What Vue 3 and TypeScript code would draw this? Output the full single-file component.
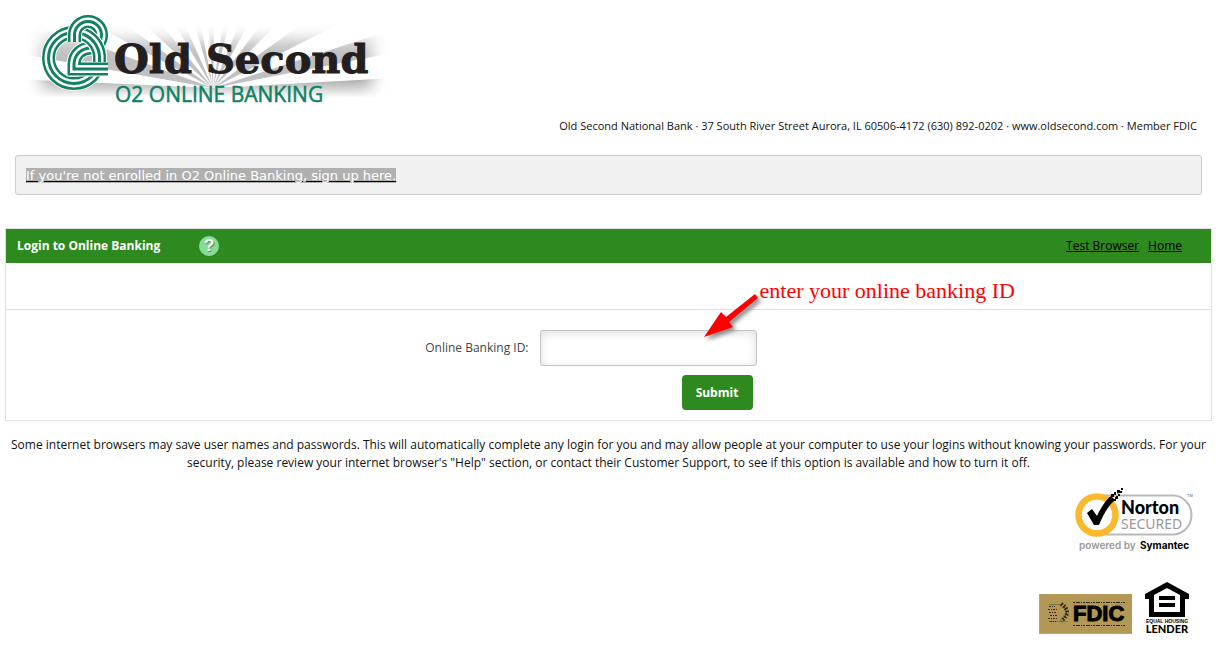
<script setup lang="ts">
import { ref } from 'vue'

const bankingId = ref('')

// Angles in degrees, measured clockwise from the positive x axis; [start, end] of each grey ray.
const rays: [number, number][] = [
  [-170, -160], [-152, -144], [-137, -129], [-121, -114], [-106, -101],
  [-94, -89], [-81, -76], [-68, -61], [-53, -45], [-36, -27], [-18, -11],
]

function wedge([from, to]: [number, number]): string {
  const point = (deg: number): string => {
    const a = (deg * Math.PI) / 180
    return `${(213 + 210 * Math.cos(a)).toFixed(1)},${(88 + 210 * Math.sin(a)).toFixed(1)}`
  }
  return `213,88 ${point(from)} ${point(to)}`
}

const numeral = 'M108 69H74V65C74 54 82 48 91 48C98 46 101.500 41 101.500 35A13.500 13.500 0 0 0 74.500 35V42'
const ring = 'M74 32.500A25.500 25.500 0 1 0 99.500 58A25.500 25.500 0 0 0 74 32.500'
const ringArc = 'M84 34.500A25.500 25.500 0 0 1 99.500 60V62'
const bands = [
  { color: '#fff', width: 15 },
  { color: '#108163', width: 13 },
  { color: '#fff', width: 8 },
  { color: '#108163', width: 3 },
]
</script>

<template>
  <div class="page">
    <header class="top">
      <svg class="logo" width="400" height="115" viewBox="0 0 400 115" role="img" aria-label="Old Second O2 Online Banking">
        <defs>
          <filter id="soft" x="-20%" y="-50%" width="140%" height="200%"><feGaussianBlur stdDeviation="8" /></filter>
          <linearGradient id="floor" gradientUnits="userSpaceOnUse" x1="0" y1="79" x2="0" y2="98">
            <stop offset="0" stop-color="#aaa" />
            <stop offset="1" stop-color="#fff" />
          </linearGradient>
          <mask id="glow"><rect x="42" y="40" width="330" height="76" fill="#fff" filter="url(#soft)" /></mask>
        </defs>
        <g mask="url(#glow)">
          <polygon v-for="(r, i) in rays" :key="i" :points="wedge(r)" fill="#c0c0c2" />
          <path d="M15 79L213 88L395 78V98H15Z" fill="url(#floor)" />
        </g>
        <g fill="none">
          <path v-for="b in bands" :key="'r' + b.width" :d="ring" :stroke="b.color" :stroke-width="b.width" />
          <path v-for="b in bands" :key="'n' + b.width" :d="numeral" :stroke="b.color" :stroke-width="b.width" />
          <path v-for="b in bands" :key="'a' + b.width" :d="ringArc" :stroke="b.color" :stroke-width="b.width" />
        </g>
        <text class="brand" x="114" y="73">Old Second</text>
        <text class="product" x="115" y="102">O2 ONLINE BANKING</text>
      </svg>
      <p class="address">Old Second National Bank · 37 South River Street Aurora, IL 60506-4172 (630) 892-0202 · www.oldsecond.com · Member FDIC</p>
    </header>

    <div class="notice"><a href="#enroll">If you're not enrolled in O2 Online Banking, sign up here.</a></div>

    <main class="panel">
      <div class="bar">
        <h1>Login to Online Banking</h1>
        <button class="help" type="button" aria-label="Help">?</button>
        <nav><a href="#test">Test Browser</a><a href="#home">Home</a></nav>
      </div>
      <div class="blank"></div>
      <form class="form" @submit.prevent>
        <div class="field">
          <label for="banking-id">Online Banking ID:</label>
          <input id="banking-id" v-model="bankingId" type="text" />
        </div>
        <button class="submit" type="submit">Submit</button>
      </form>
      <div class="hint">
        <svg width="63" height="56" viewBox="0 0 63 56" aria-hidden="true">
          <path d="M58 4L61 8L32 32L36 37L7 47L24 22L29 27Z" fill="#f00" />
        </svg>
        <span>enter your online banking ID</span>
      </div>
    </main>

    <p class="warning">Some internet browsers may save user names and passwords. This will automatically complete any login for you and may allow people at your computer to use your logins without knowing your passwords. For your security, please review your internet browser's "Help" section, or contact their Customer Support, to see if this option is available and how to turn it off.</p>

    <footer class="seals">
      <svg width="124" height="70" viewBox="0 0 124 70" role="img" aria-label="Norton Secured, powered by Symantec">
        <path d="M27 12.500H102A18.500 19.500 0 0 1 102 51.500H27" fill="none" stroke="#b9b9b9" stroke-width="2" />
        <circle cx="26" cy="32" r="18.500" fill="#fff" stroke="#fdb92e" stroke-width="6.500" />
        <path d="M16 30L21 26L26 33C30 24 35 17 40 13L44 17C37 23 32 32 28 42H23Z" fill="#000" />
        <path d="M40 11h3v3h-3zM43 9h2v3h-2zM44 13h3v3h-3zM46 7h3v3h-3zM50 5h2v2h-2zM47 11h2v2h-2zM38 14h3v3h-3zM42 16h3v2h-3zM49 8h2v2h-2z" fill="#000" />
        <path d="M43 12h2v2h-2zM46 10h2v1h-2z" fill="#fdb92e" />
        <text class="norton" x="50" y="31">Norton</text>
        <text class="secured" x="50" y="46">SECURED</text>
        <text class="tm" x="116" y="14">TM</text>
        <text class="powered" x="8" y="66">powered by</text>
        <text class="symantec" x="69" y="66">Symantec</text>
      </svg>
      <div class="lower">
        <svg class="fdic-seal" width="93" height="40" viewBox="0 0 93 40" role="img" aria-label="FDIC">
          <rect width="93" height="40" fill="#b39755" />
          <path d="M0.500 0V39.500H93" fill="none" stroke="#aaa69a" />
          <path d="M10 10.500h17M10 27.500h19" stroke="#8d7439" />
          <g stroke="#342b18" fill="none">
            <path d="M10 12.500h6M9 15.500h9M10 18.500h7M11 21.500h7M9 24.500h10M11 27.500h6" stroke-dasharray="2 1 1 1" />
            <path d="M22 10Q34 18 22 27" stroke-width="4" stroke-dasharray="1.500 1.500" />
            <path d="M24 12Q31 18 24 25" />
          </g>
          <path d="M34 8.500H86M34 31.500H86" stroke="#2c2414" stroke-dasharray="2 1 4 1 1 1" />
          <text class="fdic" x="34" y="27">FDIC</text>
        </svg>
        <svg width="48" height="56" viewBox="0 0 48 56" role="img" aria-label="Equal Housing Lender">
          <path d="M24 2L46 14V19H42V37H6V19H2V14Z M24 8L11 15V32H37V15Z" fill="#000" fill-rule="evenodd" />
          <path d="M16 16H32V20H16ZM16 23H32V27H16Z" fill="#000" />
          <text class="equal" x="24" y="43">EQUAL HOUSING</text>
          <text class="lender" x="24" y="53">LENDER</text>
        </svg>
      </div>
    </footer>
  </div>
</template>

<style>
body {
  margin: 0;
  background: #fff;
}
</style>

<style scoped>
.page {
  font-family: "Open Sans", sans-serif;
  font-size: 12px;
  line-height: 18px;
  color: #111;
  padding: 0 7px 0 5px;
}
.logo {
  display: block;
}
.brand {
  font: bold 40px "DejaVu Serif", serif;
  fill: #231f20;
  stroke: #231f20;
  stroke-width: 1px;
}
.product {
  font: 400 21px "Open Sans", sans-serif;
  fill: #108163;
  stroke: #108163;
  stroke-width: 0.5px;
}
.top {
  margin-left: -5px;
}
.address {
  margin: 2px 15px 0 0;
  text-align: right;
  font-size: 11px;
}
.notice {
  margin: 20px 10px 0;
  padding: 11px 10px 9px;
  border: 1px solid #ccc;
  border-radius: 3px;
  background: #f1f1f1;
}
.notice a {
  background: #b0b0b0;
  color: #fff;
  font: 13px/18px "DejaVu Sans", sans-serif;
  text-decoration-color: #000;
}
.panel {
  position: relative;
  margin-top: 33px;
  border: 1px solid #e0e0e0;
}
.bar {
  display: flex;
  align-items: center;
  height: 34px;
  padding: 0 29px 0 11px;
  background: #2e8a1f;
}
h1 {
  margin: 0;
  font-size: 12px;
  font-weight: 700;
  color: #fff;
}
.help {
  margin-left: 39px;
  width: 20px;
  height: 20px;
  padding: 0;
  border: 0;
  border-radius: 50%;
  background: #87dc98;
  color: #fff;
  font: bold 17px/20px "Liberation Sans", sans-serif;
  text-shadow: 1px 1px 1px #4c8a58;
}
nav {
  display: flex;
  gap: 9px;
  margin-left: auto;
}
nav a {
  color: #000;
}
.blank {
  height: 46px;
  border-bottom: 1px solid #e0e0e0;
}
.form {
  padding: 20px 0 10px;
}
.field {
  display: grid;
  grid-template-columns: calc(50% - 80px) 217px;
  column-gap: 11px;
  align-items: center;
}
label {
  text-align: right;
  color: #444;
}
input {
  box-sizing: border-box;
  height: 36px;
  padding: 0 10px;
  border: 1px solid #c4c4c4;
  border-radius: 3px;
  box-shadow: inset 0 2px 8px #ddd;
  font: inherit;
}
.submit {
  display: block;
  width: 71px;
  height: 35px;
  margin: 9px 0 0 calc(50% + 73px);
  border: 0;
  border-radius: 4px;
  background: #2e8a1f;
  color: #fff;
  font: 700 12px "Open Sans", sans-serif;
}
.hint {
  position: absolute;
  top: 61px;
  left: calc(50% + 88px);
  display: flex;
  align-items: flex-start;
  color: #f00;
  font: 22px/26px "Liberation Serif", serif;
  pointer-events: none;
}
.hint svg {
  filter: drop-shadow(3px 3px 2px #888);
}
.hint span {
  margin-top: -12px;
}
.warning {
  margin: 15px 0 0;
  text-align: center;
}
.seals {
  display: flex;
  flex-direction: column;
  align-items: flex-end;
  margin: 11px 17px 0 0;
}
.lower {
  display: flex;
  align-items: flex-end;
  gap: 11px;
  margin: 27px 4px 0 0;
}
.fdic-seal {
  margin-bottom: 2px;
}
.norton {
  font: 900 18px "Lato", sans-serif;
}
.secured {
  font: 14px "Noto Sans", sans-serif;
  fill: #999;
}
.tm {
  font: 4px "Liberation Sans", sans-serif;
  fill: #666;
}
.powered,
.symantec {
  font: 600 10px "Inter", sans-serif;
  fill: #999;
}
.symantec {
  font-weight: 700;
  fill: #000;
}
.fdic {
  font: bold 22px "Liberation Sans", sans-serif;
  stroke: #000;
  stroke-width: 1px;
}
.equal,
.lender {
  text-anchor: middle;
}
.equal {
  font: bold 5px "Liberation Sans", sans-serif;
}
.lender {
  font: 900 11px "Lato", sans-serif;
}
</style>
